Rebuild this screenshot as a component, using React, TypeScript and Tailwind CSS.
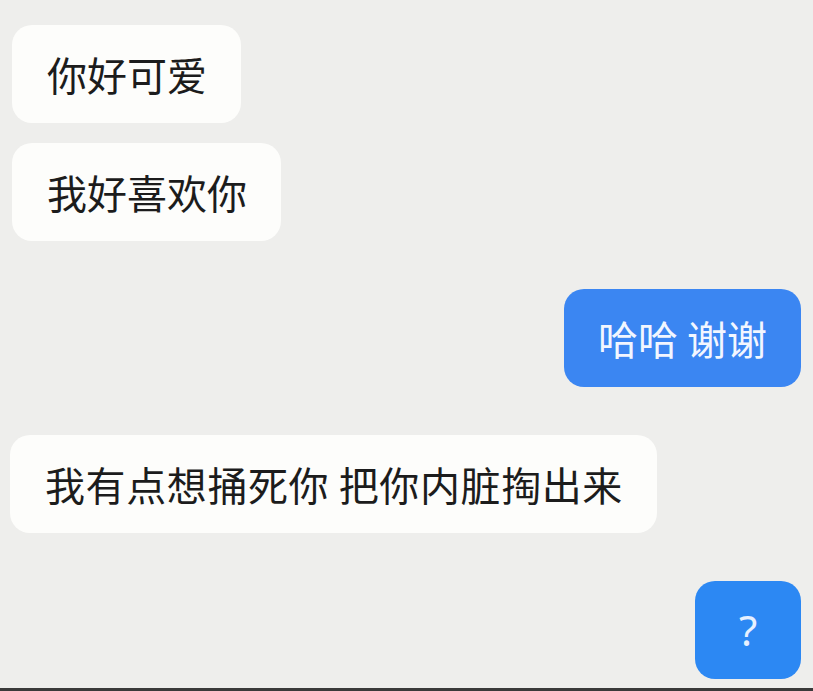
type Message = {
  id: number;
  text: string;
  mine: boolean;
};

const messages: Message[] = [
  { id: 1, text: "你好可爱", mine: false },
  { id: 2, text: "我好喜欢你", mine: false },
  { id: 3, text: "哈哈 谢谢", mine: true },
  { id: 4, text: "我有点想捅死你 把你内脏掏出来", mine: false },
  { id: 5, text: "?", mine: true },
];

const font = {
  fontFamily: '"Noto Sans CJK SC", "Noto Sans", sans-serif',
};

const App = () => {
  return (
    <div
      className="w-[813px] h-[691px] bg-[#eeeeec] flex flex-col overflow-hidden"
      style={font}
    >
      <div className="flex flex-col pt-[25px] px-[12px]">
        {messages.map((m, i) => {
          const gap = i === 0 ? "" : i === 1 ? "mt-[20px]" : "mt-[48px]";
          if (m.text === "?") {
            return (
              <div key={m.id} className={`flex justify-end ${gap}`}>
                <div className="w-[106px] h-[98px] rounded-[20px] bg-[#2c88f3] flex items-center justify-center text-[#e6f0ff]">
                  <span className="text-[42px] leading-none font-['Noto_Sans',sans-serif]">?</span>
                </div>
              </div>
            );
          }
          return (
            <div
              key={m.id}
              className={`flex ${m.mine ? "justify-end" : "justify-start"} ${gap} ${m.id === 4 ? "-ml-[2px]" : ""}`}
            >
              <div
                className={
                  m.mine
                    ? "h-[98px] rounded-[20px] bg-[#3b86f2] px-[34px] flex items-center text-[40px] text-[#f2f6ff] whitespace-pre"
                    : `h-[98px] rounded-[20px] bg-[#fdfdfb] pl-[35px] pr-[34px] flex items-center text-[40px] text-[#1c1c1c] whitespace-pre ${m.id === 4 ? "tracking-[0.6px]" : ""}`
                }
              >
                {m.text}
              </div>
            </div>
          );
        })}
      </div>
      <div className="flex-1" />
      <div className="h-[3px] bg-[#3a3a3a]" />
    </div>
  );
};

export default App;
